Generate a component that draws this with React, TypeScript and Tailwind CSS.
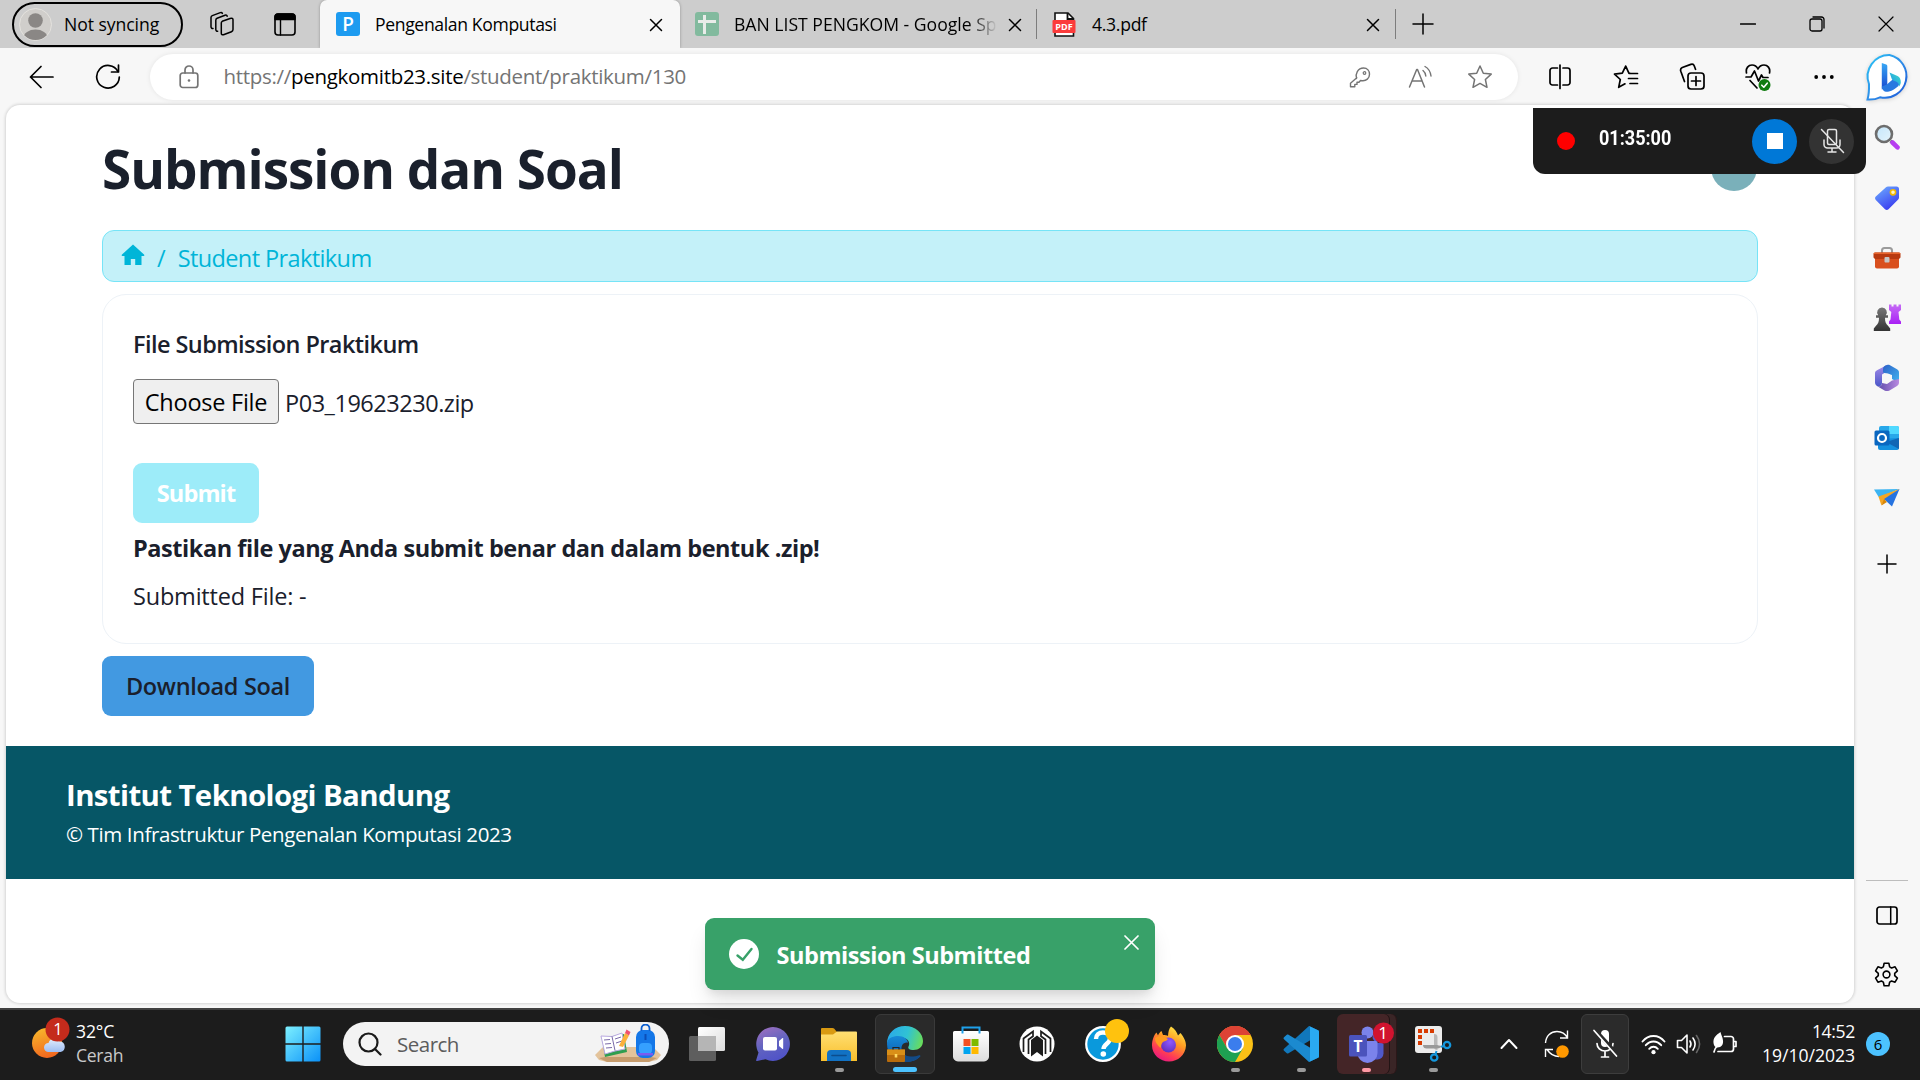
import React from "react";

type P = { children?: React.ReactNode; className?: string };

function Svg({ w, h, children, className = "" }: { w: number; h: number } & P) {
  return (
    <svg
      width={w}
      height={h}
      viewBox={`0 0 ${w} ${h}`}
      fill="none"
      stroke="currentColor"
      strokeWidth={1.5}
      strokeLinecap="round"
      strokeLinejoin="round"
      className={`shrink-0 ${className}`}
    >
      {children}
    </svg>
  );
}

const Cell = ({ children, className = "" }: P) => (
  <div className={`flex shrink-0 items-center justify-center ${className}`}>{children}</div>
);

/* ---------- tab strip ---------- */

const CloseX = ({ className = "" }: P) => (
  <Svg w={14} h={14} className={className}>
    <path d="M1.5 1.5l11 11M12.5 1.5l-11 11" />
  </Svg>
);

function TabStrip() {
  return (
    <div className="flex h-12 shrink-0 items-center bg-[#cdcdcd] text-[17.6px] text-black">
      <div className="ml-3 flex h-[45px] w-[171px] shrink-0 items-center rounded-full border-2 border-black pl-[5px]">
        <svg width="33" height="33" viewBox="0 0 33 33" className="shrink-0">
          <defs>
            <clipPath id="av">
              <circle cx="16.5" cy="16.5" r="15.5" />
            </clipPath>
          </defs>
          <circle cx="16.5" cy="16.5" r="16" fill="#d0cecb" stroke="#e4e2de" strokeWidth="1" />
          <g clipPath="url(#av)" fill="#8a8785">
            <circle cx="16.5" cy="12.5" r="7.3" />
            <ellipse cx="16.5" cy="30" rx="12" ry="8.5" />
          </g>
        </svg>
        <span className="ml-[12px] whitespace-nowrap tracking-[-0.06px]">Not syncing</span>
      </div>
      <Svg w={26} h={26} className="ml-[26px]">
        <path d="M13.2 10.3l8.6-3a1.6 1.6 0 0 1 2.2 1.5v9.8c0 1-.5 1.700-1.500 2.100l-8 3c-1.200.4-2.200-.3-2.200-1.500V12c0-.8.300-1.400.900-1.700z" />
        <path d="M8.700 20.200c-1 .2-1.900-.5-1.900-1.600V9.200c0-1 .4-1.600 1.300-2l7.900-3c1-.4 1.900 0 2.200 1" />
        <path d="M4 17.500c-1.100.1-2-.6-2-1.700V6.600c0-1 .4-1.600 1.300-2l8-3c.9-.3 1.700 0 2.100.800" />
      </Svg>
      <Svg w={22} h={23} className="ml-[39px]">
        <rect x="1" y="1" width="20" height="21" rx="3" strokeWidth="1.6" />
        <path d="M1 6.500V4a3 3 0 0 1 3-3h14a3 3 0 0 1 3 3v2.500z" fill="currentColor" />
        <path d="M6.500 7v15" strokeWidth="1.400" />
      </Svg>

      <div className="ml-6 flex h-12 w-[360px] shrink-0 items-center rounded-t-[7px] bg-[#f7f7f7] pl-4 pr-[17px] shadow-[0_0_3px_rgba(0,0,0,0.3)]">
        <div className="flex size-6 shrink-0 items-center justify-center rounded-[3px] bg-[#1d9bf0] text-[19px] font-semibold leading-none text-white">
          P
        </div>
        <span className="ml-[15px] whitespace-nowrap tracking-[-0.36px]">Pengenalan Komputasi</span>
        <CloseX className="ml-auto mt-0.5" />
      </div>

      <div className="flex h-[30px] w-[357px] shrink-0 items-center border-r-[1.500px] border-[#7d7d7d] pl-[15px] pr-[14px]">
        <svg width="24" height="24" viewBox="0 0 24 24" className="shrink-0">
          <rect width="24" height="24" rx="3" fill="#82ba9e" />
          <path d="M3 9.500h18M9.500 3v19" stroke="#e9ece9" strokeWidth="3" />
        </svg>
        <span className="ml-[15px] w-[262px] shrink-0 overflow-hidden whitespace-nowrap bg-linear-to-r from-black from-88% to-[#c4c4c4] bg-clip-text text-transparent">
          BAN LIST PENGKOM - Google Sp
        </span>
        <CloseX className="ml-auto mt-0.5" />
      </div>

      <div className="flex h-[30px] w-[359px] shrink-0 items-center border-r-[1.500px] border-[#7d7d7d] pl-[15px] pr-[15px]">
        <svg width="24" height="25" viewBox="0 0 24 25" className="shrink-0">
          <path d="M3 1h13l5.500 5.500V24H3z" fill="#fff" stroke="#111" strokeWidth="1.600" />
          <path d="M15.500 1v6H21" fill="none" stroke="#111" strokeWidth="1.800" />
          <rect x="0.500" y="8" width="23" height="13" rx="1" fill="#fb3b3b" />
          <text x="12" y="18" fontSize="9" fontWeight="700" fill="#fff" textAnchor="middle" fontFamily="Open Sans, sans-serif">
            PDF
          </text>
        </svg>
        <span className="ml-[16px] whitespace-nowrap tracking-[-0.3px]">4.3.pdf</span>
        <CloseX className="ml-auto mt-0.5" />
      </div>

      <Svg w={22} h={22} className="ml-4">
        <path d="M11 1v20M1 11h20" />
      </Svg>

      <div className="ml-auto flex">
        <Cell className="w-[69px]">
          <Svg w={16} h={16}>
            <path d="M0.500 8h15" strokeWidth="1.300" />
          </Svg>
        </Cell>
        <Cell className="w-[69px]">
          <Svg w={16} h={16}>
            <rect x="1" y="3" width="12" height="12" rx="2" strokeWidth="1.300" />
            <path d="M4 1h8.500A2.500 2.500 0 0 1 15 3.500V12" strokeWidth="1.300" />
          </Svg>
        </Cell>
        <Cell className="w-[69px]">
          <Svg w={16} h={16}>
            <path d="M1 1l14 14M15 1L1 15" strokeWidth="1.200" />
          </Svg>
        </Cell>
      </div>
    </div>
  );
}

/* ---------- toolbar ---------- */

function BingLogo() {
  return (
    <svg width="46" height="47" viewBox="0 0 46 47" className="mt-px overflow-visible drop-shadow-sm">
      <defs>
        <linearGradient id="bg1" x1="0" y1="0" x2="1" y2="1">
          <stop offset="0" stopColor="#29c5f6" />
          <stop offset="0.500" stopColor="#2f8fe9" />
          <stop offset="1" stopColor="#1a53d6" />
        </linearGradient>
        <linearGradient id="bg2" x1="0" y1="0" x2="0" y2="1">
          <stop offset="0" stopColor="#38a8f5" />
          <stop offset="1" stopColor="#1746cf" />
        </linearGradient>
        <linearGradient id="bg3" x1="1" y1="0" x2="0" y2="1">
          <stop offset="0" stopColor="#3fe0c8" />
          <stop offset="1" stopColor="#1b8ceb" />
        </linearGradient>
      </defs>
      <path d="M23.500 1A21.500 21.500 0 1 1 14 43.300C10.500 45 6 45.800 1.500 45.500C2.800 41 3.200 36.500 3 30A21.500 21.500 0 0 1 23.500 1z" fill="#fff" stroke="url(#bg1)" strokeWidth="2" />
      <path d="M15.800 9l4.400 1.500c.7.300 1.100.8 1.100 1.600v18.400l-5.500 5V9z" fill="url(#bg2)" />
      <path d="M15.800 32.500c0 4 3.200 6 7.200 5 3.500-.9 6.500-2.800 8.800-5 1.500-1.700 2-3 2-5.500l-6.500-2-6.500 5.500z" fill="#2878e0" />
      <path d="M23.500 18.500l8 3.500c2.300 1.200 3.500 3.500 3.300 6.500-.2 1.800-.8 3-2 4.200.5-3-1-4.500-3.500-5.500l-2-.8c-.8-.3-1.300-.8-1.600-1.600z" fill="url(#bg3)" />
    </svg>
  );
}

function Toolbar() {
  return (
    <div className="flex h-[57px] shrink-0 items-center bg-[#f7f7f7] pl-[9px] text-black">
      <Cell className="w-[66px]">
        <Svg w={26} h={24}>
          <path d="M24 12H1.500M12 1.500L1.500 12 12 22.500" strokeWidth="1.700" />
        </Svg>
      </Cell>
      <Cell className="w-[66px]">
        <Svg w={26} h={26}>
          <path d="M23 7.500A11.300 11.300 0 1 0 24.300 13" strokeWidth="1.700" />
          <path d="M23.500 1v7h-7" strokeWidth="1.700" />
        </Svg>
      </Cell>
      <div className="ml-[9px] flex h-[46px] w-[1368px] shrink-0 items-center rounded-full bg-white pl-[29px] pr-2 text-[#747474] shadow-[0_0_5px_rgba(0,0,0,0.08)]">
        <Svg w={20} h={24}>
          <rect x="1.200" y="8" width="17.600" height="14.500" rx="2.500" strokeWidth="1.700" />
          <path d="M6 8V5a4 4 0 0 1 8 0v3" strokeWidth="1.700" />
          <circle cx="10" cy="15.500" r="1.300" fill="currentColor" stroke="none" />
        </Svg>
        <span className="ml-[24.500px] whitespace-nowrap text-[20.5px] tracking-[-0.3px]">
          https://<span className="text-black">pengkomitb23.site</span>/student/praktikum/130
        </span>
        <Cell className="ml-auto w-[60px]">
          <Svg w={22} h={24}>
            <path d="M7.500 13.500c-1.400-4.500 1.200-10.500 7-10.500 4 0 6 3 6 6.200 0 4-3.200 7-7.500 6.500l-1.500-.2-1.500 1.700H8v2.200H5.800v2.300H1.500v-3.500l6.300-5.500" strokeWidth="1.400" />
            <circle cx="15.500" cy="8" r="1.300" strokeWidth="1.200" />
          </Svg>
        </Cell>
        <Cell className="w-[60px]">
          <Svg w={24} h={24}>
            <path d="M1.500 22L8.700 4.500h.8L16.500 22M4 16h10.200" />
            <path d="M15 5.500c1.500 1.200 2.500 3 2.800 5.500M17 1.500c3.500 2 5.500 5.500 6 9.500" strokeWidth="1.400" />
          </Svg>
        </Cell>
        <Cell className="w-[60px]">
          <Svg w={26} h={26}>
            <path d="M13 2l3.300 7.200 7.900.9-5.800 5.400 1.600 7.800L13 19.400l-7 3.900 1.600-7.800-5.800-5.400 7.900-.9z" />
          </Svg>
        </Cell>
      </div>
      <Cell className="ml-[9px] w-[66px]">
        <Svg w={24} h={26}>
          <path d="M9.500 4H4.500A2.500 2.500 0 0 0 2 6.500v12A2.500 2.500 0 0 0 4.500 21h5M12 1v23.500M15 4h4.500A2.500 2.500 0 0 1 22 6.500v12a2.500 2.500 0 0 1-2.500 2.500H15" strokeWidth="1.700" />
        </Svg>
      </Cell>
      <Cell className="w-[66px]">
        <Svg w={26} h={26}>
          <path d="M17 9.300h-1l-3.300-7.200L9.300 9.200l-7.800.9 5.800 5.400-1.600 7.800 6.300-3.500M17 9.500h7.500M15.500 14.500h9M17 19.500h7.500" strokeWidth="1.700" />
        </Svg>
      </Cell>
      <Cell className="w-[66px]">
        <Svg w={26} h={28}>
          <rect x="9" y="10" width="16" height="16" rx="3" strokeWidth="1.700" />
          <path d="M17 13.500v9M12.500 18h9M5.500 18.500L1.800 8.300C1.200 6.500 1.800 5.200 3.300 4.500l8.500-3.100c1.500-.5 3 .2 3.500 1.600l1.200 3.300" strokeWidth="1.700" />
        </Svg>
      </Cell>
      <Cell className="w-[66px]">
        <Svg w={26} h={28}>
          <path d="M1.500 10C.5 5 3.500 2 7 2c2.800 0 4.800 1.500 6 4 1.200-2.500 3.200-4 6-4 3.500 0 6.500 3 5.500 8M5 17.500l7 7.500" strokeWidth="1.700" />
          <path d="M1 14h5l3.500-6 4 10 3-6 1.500 2.500h5" strokeWidth="1.700" />
          <circle cx="19.500" cy="22" r="6" fill="#107c10" stroke="none" />
          <path d="M16.800 22.200l2 2 3.400-4" stroke="#fff" strokeWidth="1.600" />
        </Svg>
      </Cell>
      <Cell className="w-[66px]">
        <Svg w={20} h={6}>
          <g fill="currentColor" stroke="none">
            <circle cx="2.200" cy="3" r="1.900" />
            <circle cx="10" cy="3" r="1.900" />
            <circle cx="17.800" cy="3" r="1.900" />
          </g>
        </Svg>
      </Cell>
      <Cell className="w-[63px]">
        <BingLogo />
      </Cell>
    </div>
  );
}

/* ---------- web page ---------- */

function Page() {
  return (
    <main className="ml-1.5 flex h-[898px] w-[1848px] shrink-0 flex-col overflow-hidden rounded-[14px] bg-white text-[23.5px] leading-9 text-[#1a202c] shadow-[0_0_3px_1px_rgba(0,0,0,0.14)]">
      <div className="flex flex-col px-24">
        <div className="flex h-[125px] items-start justify-between pt-8">
          <h1 className="whitespace-nowrap text-[53px] font-bold leading-[64px] tracking-[-1.03px]">Submission dan Soal</h1>
          <div className="mr-px mt-2 size-[46px] rounded-full bg-[#7ab0ba]" />
        </div>
        <nav className="flex h-[52px] items-center rounded-xl border-[1.500px] border-[#76e4f7] bg-[#c4f1f9] pl-[18px] text-[#00b5d8]">
          <svg width="24" height="22" viewBox="0 0 24 22" className="mb-[3px]" fill="currentColor">
            <path d="M12 0.500L23 10.500c.7.700.4 1.500-.4 1.500H20.500v9h-6.300v-6H9.800v6H3.500v-9H1.400c-.8 0-1.100-.8-.4-1.500z" />
          </svg>
          <span className="ml-3 mt-[3px]">/</span>
          <span className="ml-3 mt-[3px] whitespace-nowrap tracking-[-0.6px]">Student Praktikum</span>
        </nav>

        <section className="mt-3 flex h-[350px] flex-col items-start rounded-3xl border-[1.500px] border-[#edf2f7] pl-[30px] pt-[31px]">
          <label className="whitespace-nowrap font-semibold tracking-[-0.57px]">File Submission Praktikum</label>
          <div className="mt-[17px] flex h-[45px] items-center">
            <button className="flex h-[45px] w-[146px] items-center justify-center whitespace-nowrap rounded-[4px] border-[1.500px] border-[#767676] bg-[#efefef] tracking-[-0.25px] text-black">
              Choose File
            </button>
            <span className="ml-1.5 mt-0.5 whitespace-nowrap tracking-[-0.47px]">P03_19623230.zip</span>
          </div>
          <button className="mt-[39px] flex h-[60px] w-[126px] shrink-0 items-center justify-center rounded-[9px] bg-[#9decf9] font-bold tracking-[-0.85px] text-white">
            Submit
          </button>
          <p className="mt-[7px] whitespace-nowrap font-bold tracking-[-0.44px]">
            Pastikan file yang Anda submit benar dan dalam bentuk .zip!
          </p>
          <p className="mt-3 whitespace-nowrap tracking-[-0.2px]">Submitted File: -</p>
        </section>

        <button className="mt-3 flex h-[60px] w-[212px] items-center justify-center whitespace-nowrap rounded-[9px] bg-[#4299e1] font-semibold tracking-[-0.32px]">
          Download Soal
        </button>
      </div>

      <footer className="mt-[30px] flex h-[133px] flex-col bg-[#065666] pl-[60px] pt-[27px] text-white">
        <h2 className="whitespace-nowrap text-[29.4px] font-bold leading-[45px] tracking-[-0.6px]">Institut Teknologi Bandung</h2>
        <p className="whitespace-nowrap text-[20.5px] leading-8 tracking-[-0.38px]">© Tim Infrastruktur Pengenalan Komputasi 2023</p>
      </footer>
    </main>
  );
}

/* ---------- Edge sidebar ---------- */

function Sidebar() {
  return (
    <aside className="flex h-[903px] w-[66px] shrink-0 flex-col items-center pb-[5px] pr-px pt-0.5 text-black">
      <Cell className="h-[60px] w-full">
        <svg width="26" height="26" viewBox="0 0 26 26">
          <defs>
            <linearGradient id="sg" x1="0" y1="0" x2="1" y2="1">
              <stop offset="0" stopColor="#c4e6fb" />
              <stop offset="1" stopColor="#e6f4fb" />
            </linearGradient>
          </defs>
          <path d="M16.500 17l2.500 2.200" stroke="#666" strokeWidth="3" />
          <path d="M18.500 18.500l5 4.800" stroke="#b63df0" strokeWidth="4.600" strokeLinecap="round" />
          <circle cx="10" cy="10" r="8" fill="url(#sg)" stroke="#6d6d6d" strokeWidth="2.600" />
        </svg>
      </Cell>
      <Cell className="h-[61px] w-full">
        <svg width="26" height="26" viewBox="0 0 26 26">
          <defs>
            <linearGradient id="tg" x1="0" y1="0" x2="0.600" y2="1">
              <stop offset="0" stopColor="#6fb1ff" />
              <stop offset="1" stopColor="#3a3df0" />
            </linearGradient>
          </defs>
          <path d="M14 1.500h8.500a2.500 2.500 0 0 1 2.500 2.500v8.500c0 .8-.2 1.400-.8 2L14.500 24.200c-1 1-2.500 1-3.500 0L1.800 15c-1-1-1-2.400 0-3.400L12 2.300c.5-.5 1.200-.8 2-.8z" fill="url(#tg)" />
          <circle cx="19" cy="7.300" r="2.600" fill="#fff3c4" stroke="#f5b800" strokeWidth="1.600" />
        </svg>
      </Cell>
      <Cell className="h-[60px] w-full">
        <svg width="28" height="24" viewBox="0 0 28 24">
          <path d="M9 7V4.500A2.500 2.500 0 0 1 11.500 2h5A2.500 2.500 0 0 1 19 4.500V7" fill="none" stroke="#9b9b9b" strokeWidth="2" />
          <rect x="2" y="10" width="24" height="12.500" rx="2" fill="#d9501e" />
          <path d="M2 6.500h24a1.500 1.500 0 0 1 1.500 1.500v3.500L26 13H2L.5 11.500V8A1.500 1.500 0 0 1 2 6.500z" fill="#b83a10" />
          <path d="M.5 8A1.500 1.500 0 0 1 2 6.500h24A1.500 1.500 0 0 1 27.500 8z" fill="#e8642c" />
          <rect x="11.500" y="11" width="5" height="5.500" rx="1" fill="#c6c6c6" />
        </svg>
      </Cell>
      <Cell className="h-[59px] w-full">
        <svg width="28" height="29" viewBox="0 0 28 29">
          <defs>
            <linearGradient id="rk" x1="0" y1="0" x2="0" y2="1">
              <stop offset="0" stopColor="#c56bf5" />
              <stop offset="1" stopColor="#a920f5" />
            </linearGradient>
            <linearGradient id="pw" x1="0" y1="0" x2="0" y2="1">
              <stop offset="0" stopColor="#777" />
              <stop offset="1" stopColor="#333" />
            </linearGradient>
          </defs>
          <path d="M16 1.500h2.500v2h2v-2h3v2h2v-2H28V7l-2.500 2 .8 7.500L28 18.500V21H16v-2.500l1.500-2 .8-7.500L16 7z" fill="url(#rk)" />
          <path d="M9 4.500a4.800 4.800 0 0 1 3.800 7.800H15v2.400h-3c0 4 .7 6 3.200 8.300l2 2.500V28H.8v-2.500l2-2.500C5.300 20.700 6 18.700 6 14.700H3v-2.400h2.200A4.800 4.800 0 0 1 9 4.500z" fill="url(#pw)" />
        </svg>
      </Cell>
      <Cell className="h-[61px] w-full">
        <svg width="26" height="28" viewBox="0 0 26 28">
          <defs>
            <linearGradient id="m1" x1="0" y1="0" x2="0" y2="1">
              <stop offset="0" stopColor="#a58ce8" />
              <stop offset="1" stopColor="#4b57c9" />
            </linearGradient>
            <linearGradient id="m2" x1="0" y1="0" x2="1" y2="1">
              <stop offset="0" stopColor="#2c61c8" />
              <stop offset="1" stopColor="#43b6f0" />
            </linearGradient>
            <linearGradient id="m3" x1="0" y1="0" x2="1" y2="0">
              <stop offset="0" stopColor="#5a49a8" />
              <stop offset="1" stopColor="#b98ae0" />
            </linearGradient>
          </defs>
          <path d="M13 1L3 6.300C1.500 7.100 1 8 1 9.500v9c0 1.500.8 2.800 2 3.500 2.500 1.300 5-.3 5-3v-8.500L17 5z" fill="url(#m1)" />
          <path d="M13 1c1-.3 2-.2 3 .3l7 4c1.500.9 2 1.900 2 3.400V19l-7-4v-4L9 8.500V5c0-2 1.500-3.500 4-4z" fill="url(#m2)" />
          <path d="M25 15v3.500c0 1.500-.6 2.600-2 3.400l-7.500 4.500c-1.700.9-3.300.9-5 0L3 22c2.700 1 5 0 5-3l5 1 5-3.500z" fill="url(#m3)" />
          <circle cx="13" cy="14" r="4.600" fill="#f7f7f7" />
        </svg>
      </Cell>
      <Cell className="h-[60px] w-full">
        <svg width="26" height="26" viewBox="0 0 26 26">
          <path d="M7 1h16a2 2 0 0 1 2 2v13H5V3a2 2 0 0 1 2-2z" fill="#28a8ea" />
          <path d="M15 1h8a2 2 0 0 1 2 2v6H15z" fill="#50d9ff" />
          <path d="M5 9h10v8H5z" fill="#0364b8" />
          <path d="M4 14l21-1v10a2 2 0 0 1-2 2H6a2 2 0 0 1-2-2z" fill="#1490df" />
          <path d="M25 13v11L12 17z" fill="#1066b5" />
          <rect x="0.500" y="5.500" width="15" height="15" rx="1.500" fill="#0a67c0" />
          <circle cx="8" cy="13" r="4" fill="none" stroke="#fff" strokeWidth="2.200" />
        </svg>
      </Cell>
      <Cell className="h-[60px] w-full">
        <svg width="28" height="20" viewBox="0 0 28 20">
          <path d="M1 1.500L26.500 1 6 9.500z" fill="#3cb4f2" />
          <path d="M26.500 1L5.500 8.500l2.800 8.800 3-4.300z" fill="#f5a623" />
          <path d="M26.500 1L11 11l8 7.500z" fill="#2673e0" />
          <path d="M11 11l-2.500 6.500L14 14z" fill="#d98708" />
        </svg>
      </Cell>
      <Cell className="mt-1.5 h-[60px] w-full">
        <Svg w={20} h={20}>
          <path d="M10 1v18M1 10h18" />
        </Svg>
      </Cell>
      <div className="mt-auto h-px w-[42px] bg-[#bdbdbd]" />
      <Cell className="mt-1 h-[60px] w-full">
        <Svg w={22} h={19}>
          <rect x="1" y="1" width="20" height="17" rx="2.500" strokeWidth="1.700" />
          <path d="M14.700 1v17" />
        </Svg>
      </Cell>
      <Cell className="h-[58px] w-full">
        <svg width="27" height="27" viewBox="0 0 24 24" fill="none" stroke="currentColor" strokeWidth="1.400" strokeLinejoin="round">
          <path d="M9.900 1.500h4.200l.7 3.200 1.700 1 3.100-1 2.100 3.600-2.400 2.200v2l2.400 2.200-2.100 3.600-3.100-1-1.700 1-.7 3.200H9.900l-.7-3.200-1.700-1-3.100 1-2.100-3.600 2.400-2.200v-2L2.300 8.300l2.100-3.600 3.100 1 1.700-1z" transform="translate(0 .5)" />
          <circle cx="12" cy="12" r="3" />
        </svg>
      </Cell>
    </aside>
  );
}

/* ---------- overlays ---------- */

function Recorder() {
  return (
    <div className="absolute left-[1533px] top-[108px] flex h-[66px] w-[333px] items-center rounded-b-xl bg-[#1c1c1c] pl-6">
      <div className="size-[18px] rounded-full bg-[#ff0000]" />
      <span className="mb-[5px] ml-[24px] origin-left scale-x-[0.860] font-['Roboto'] text-[21px] font-bold leading-none text-white">
        01:35:00
      </span>
      <Cell className="ml-auto size-[45px] rounded-full bg-[#0078d7]">
        <div className="size-4 bg-white" />
      </Cell>
      <Cell className="ml-3 mr-3 size-[45px] rounded-full bg-[#333] text-[#e6e6e6]">
        <Svg w={26} h={26}>
          <rect x="8.500" y="1.500" width="9" height="15" rx="1.500" />
          <path d="M5 12v4.500a3.500 3.500 0 0 0 3.500 3.500h9a3.500 3.500 0 0 0 3.500-3.500V12M13 20v4M9 24h8M2.500 1.500l22 23" />
        </Svg>
      </Cell>
    </div>
  );
}

function Toast() {
  return (
    <div className="absolute left-[705px] top-[918px] flex h-[72px] w-[450px] items-center rounded-[9px] bg-[#38a169] pl-6 text-white shadow-[0_14px_22px_-4px_rgba(0,0,0,0.12),0_6px_9px_-3px_rgba(0,0,0,0.08)]">
      <svg width="30" height="30" viewBox="0 0 30 30" className="shrink-0">
        <circle cx="15" cy="15" r="15" fill="#fff" />
        <path d="M8.500 16.500l5.300 4.300 8.700-10.800" fill="none" stroke="#38a169" strokeWidth="2.400" strokeLinecap="round" />
      </svg>
      <span className="ml-[17.500px] mt-px whitespace-nowrap text-[23.5px] font-bold leading-9 tracking-[-0.45px]">Submission Submitted</span>
      <svg width="15" height="15" viewBox="0 0 15 15" className="mb-6 ml-auto mr-[16px]" stroke="#fff" strokeWidth="1.700" strokeLinecap="round">
        <path d="M1 1l13 13M14 1L1 14" />
      </svg>
    </div>
  );
}

/* ---------- taskbar ---------- */

function TaskApp({ children, className = "", mark = "" }: P & { mark?: string }) {
  return (
    <div className={`relative flex h-[60px] w-[60px] shrink-0 items-center justify-center rounded-md ${className}`}>
      {children}
      {mark && <span className={`absolute bottom-0.5 h-1 rounded-full ${mark}`} />}
    </div>
  );
}

function TaskApps() {
  return (
    <div className="ml-2 flex gap-1.5">
      <TaskApp>
        <svg width="36" height="34" viewBox="0 0 36 34">
          <defs>
            <linearGradient id="tv" x1="0" y1="0" x2="1" y2="1">
              <stop offset="0" stopColor="#fff" />
              <stop offset="1" stopColor="#dcdcdc" />
            </linearGradient>
          </defs>
          <rect x="9" y="0" width="27" height="24" rx="1.500" fill="url(#tv)" />
          <rect x="0" y="9" width="27" height="25" rx="1.500" fill="#5e5e5e" />
          <path d="M9 9h18v15H9z" fill="#b5b5b5" />
        </svg>
      </TaskApp>
      <TaskApp>
        <svg width="34" height="34" viewBox="0 0 34 34">
          <defs>
            <linearGradient id="ch" x1="0.200" y1="0" x2="0.600" y2="1">
              <stop offset="0" stopColor="#9c6fc0" />
              <stop offset="0.500" stopColor="#6264c0" />
              <stop offset="1" stopColor="#4f52c8" />
            </linearGradient>
          </defs>
          <path d="M17 0a17 17 0 1 1-7.500 32.300L1 34c-.8.100-1-.3-.8-1L2.500 25.500A17 17 0 0 1 17 0z" fill="url(#ch)" />
          <rect x="7" y="10" width="14" height="13.500" rx="2" fill="#fff" />
          <path d="M23 14l3.500-3c.4-.2.700 0 .7.400v10.200c0 .4-.3.600-.7.400L23 19z" fill="#fff" />
        </svg>
      </TaskApp>
      <TaskApp mark="w-[9px] bg-[#9a9a9a]">
        <svg width="36" height="33" viewBox="0 0 36 33">
          <defs>
            <linearGradient id="fl" x1="0" y1="0" x2="0" y2="1">
              <stop offset="0" stopColor="#ffdf73" />
              <stop offset="1" stopColor="#f9bf2c" />
            </linearGradient>
          </defs>
          <path d="M1 0h10.500c.8 0 1.200.2 1.800.8L16 4v4H0V1a1 1 0 0 1 1-1z" fill="#d99a12" />
          <path d="M0 6.500h12l4-3h19a1 1 0 0 1 1 1V33H0z" fill="url(#fl)" />
          <path d="M6 33v-7a4 4 0 0 1 4-4h16a4 4 0 0 1 4 4v7z" fill="#1272c4" />
          <path d="M11 27.500h14" stroke="#0c4d8d" strokeWidth="1.600" strokeLinecap="round" />
        </svg>
      </TaskApp>
      <TaskApp className="border border-[#3a3a3a] bg-[#2a2a2a]" mark="w-6 -mb-px h-[5px] bg-[#4cc2ff]">
        <svg width="36" height="36" viewBox="0 0 36 36">
          <defs>
            <linearGradient id="e1" x1="0" y1="0.300" x2="1" y2="0.500">
              <stop offset="0" stopColor="#2aa9e8" />
              <stop offset="0.550" stopColor="#30c2d4" />
              <stop offset="1" stopColor="#68dc5e" />
            </linearGradient>
            <linearGradient id="e2" x1="0" y1="0" x2="0" y2="1">
              <stop offset="0" stopColor="#178bd8" />
              <stop offset="1" stopColor="#0a53a8" />
            </linearGradient>
          </defs>
          <path d="M0 18C0 7 8 0 18 0c11 0 18 7.500 18 15 0 6-4.500 9-9.500 9-4 0-6-1.500-5-3.500 2-3 0-8.500-6.500-9C7.500 11 1 14 0 18z" fill="url(#e1)" />
          <path d="M0 18c0-6 6-8 11-8 6 0 9.500 3 10 7-1-1-4.500-.5-6 2.500-2.500 6 3 13 11 12 4-.5 7-2 7.500-1.500C30 34.500 24 36 18 36 8 36 0 28.500 0 18z" fill="url(#e2)" />
          <path d="M15 19.500c-2.500 6 3 12 11 11 4-.5 7-2 7.500-1.500C30 34.500 24 36 18 36c-5-3-6.500-11-3-16.500z" fill="#134b87" />
          <rect x="0" y="23.500" width="18" height="12.500" rx="1" fill="#b86c0c" />
          <path d="M0 23.500h18v5.500H0z" fill="#d98f18" />
          <path d="M6 23.500v-2h6v2" fill="none" stroke="#222" strokeWidth="1.200" />
          <rect x="7.700" y="28" width="2.600" height="3.500" fill="#ffd75e" />
        </svg>
      </TaskApp>
      <TaskApp>
        <svg width="36" height="36" viewBox="0 0 36 36">
          <defs>
            <linearGradient id="st" x1="0" y1="0" x2="0" y2="1">
              <stop offset="0" stopColor="#fff" />
              <stop offset="1" stopColor="#dcdcdc" />
            </linearGradient>
          </defs>
          <path d="M0 6.500A1.500 1.500 0 0 1 1.500 5h33A1.500 1.500 0 0 1 36 6.500V30a5 5 0 0 1-5 5.500H5A5 5 0 0 1 0 30z" fill="url(#st)" />
          <path d="M9.500 7.500V1.500h17v6" fill="none" stroke="#1ea0ea" strokeWidth="2" />
          <path d="M10.500 13h7v7h-7z" fill="#f25022" />
          <path d="M18.500 13h7v7h-7z" fill="#7fba00" />
          <path d="M10.500 21h7v7h-7z" fill="#00a4ef" />
          <path d="M18.500 21h7v7h-7z" fill="#ffb900" />
        </svg>
      </TaskApp>
      <TaskApp>
        <svg width="36" height="36" viewBox="0 0 36 36">
          <circle cx="18" cy="18" r="17.500" fill="#fff" />
          <path d="M4.500 26V12.500L14 5.500v4.800L9.500 13.500V28M31.500 26V12.500L22 5.500v4.800l4.500 3.200V28" fill="none" stroke="#1c1c1c" strokeWidth="1.700" />
          <path d="M12 30.500V14l6-4.500 6 4.500v16.500l-6-4.500z" fill="#1c1c1c" />
        </svg>
      </TaskApp>
      <TaskApp>
        <svg width="36" height="36" viewBox="0 0 36 36" className="overflow-visible">
          <circle cx="18" cy="18" r="16.800" fill="#0a99dc" stroke="#fff" strokeWidth="2.200" />
          <path d="M11 13c0-4.500 3-6.500 7-6.500s7 2.300 7 6c0 5-6.500 5.500-6.500 10.500" fill="none" stroke="#fff" strokeWidth="4.400" />
          <circle cx="18.300" cy="28" r="2.800" fill="#fff" />
          <circle cx="32" cy="5" r="12" fill="#ffc20e" />
        </svg>
      </TaskApp>
      <TaskApp>
        <svg width="36" height="36" viewBox="0 0 36 36">
          <defs>
            <linearGradient id="ff" x1="0.800" y1="0" x2="0.250" y2="1">
              <stop offset="0" stopColor="#fff04a" />
              <stop offset="0.400" stopColor="#ff9a22" />
              <stop offset="0.750" stopColor="#ff3a56" />
              <stop offset="1" stopColor="#e31587" />
            </linearGradient>
            <radialGradient id="fp" cx="0.600" cy="0.300" r="0.800">
              <stop offset="0" stopColor="#9059ff" />
              <stop offset="1" stopColor="#5b2bb8" />
            </radialGradient>
          </defs>
          <path d="M20 0.500c4 2.500 6 6 7 9l2.500-2.500c4 5 5.500 9 5.500 12.500C34.500 29 27 35.500 18 35.500S1 28.500 1 19.500C1 14 3 9 5.500 6.500L7 9.500c.8-2 2-3.500 3.500-4.500L12 9c2 0 4 .3 5 1 .3-4 .7-7 3-9.500z" fill="url(#ff)" />
          <circle cx="17.500" cy="19" r="7.500" fill="url(#fp)" />
          <path d="M4 12c4-3 9-2 13 1-1 2-4 2-5.500 3.500C10 18 10.500 20 9.500 22 7 19 4 17 4 12z" fill="#ff9a1f" />
        </svg>
      </TaskApp>
      <TaskApp mark="w-[9px] bg-[#9a9a9a]">
        <svg width="36" height="36" viewBox="0 0 36 36">
          <circle cx="18" cy="18" r="18" fill="#fbc116" />
          <path d="M18 18L2.400 9A18 18 0 0 1 33.600 9H18z" fill="#dd4335" />
          <path d="M18 9h15.600A18 18 0 0 0 2.400 9l7.800 13.500z" fill="#dd4335" />
          <path d="M2.400 9A18 18 0 0 0 18 36l7.800-13.500L18 24l-7.800-1.500z" fill="#1ea152" />
          <circle cx="18" cy="18" r="9" fill="#fff" />
          <circle cx="18" cy="18" r="7" fill="#3b7ded" />
        </svg>
      </TaskApp>
      <TaskApp mark="w-[9px] bg-[#9a9a9a]">
        <svg width="36" height="36" viewBox="0 0 36 36">
          <path d="M26 0l9 4.300c.7.300 1 .8 1 1.500V9L5.500 27.300c-.6.400-1.200.4-1.700-.1L1 24.700c-.6-.6-.6-1.400 0-2z" fill="#1177bb" />
          <path d="M26 36l9-4.300c.7-.3 1-.8 1-1.500V27L5.500 8.700c-.6-.4-1.200-.4-1.700.1L1 11.300c-.6.600-.6 1.400 0 2z" fill="#1b8ad0" />
          <path d="M26 0l9 4.300c.7.300 1 .8 1 1.500v24.400c0 .7-.3 1.200-1 1.500L26 36c1-.7 1-1 1-2V2c0-1-.2-1.500-1-2z" fill="#2aa9f2" />
        </svg>
      </TaskApp>
      <TaskApp className="border-r border-[#2a1718] bg-[#442527] shadow-[inset_-6px_0_0_#3a2526,inset_-7px_0_0_#221415]" mark="w-[9px] bg-[#ff99a4]">
        <svg width="44" height="40" viewBox="0 0 44 40" className="overflow-visible">
          <circle cx="32" cy="13" r="4.500" fill="#5059c9" />
          <path d="M27 19h10a1.500 1.500 0 0 1 1.500 1.500v9a6 6 0 0 1-6 6H27z" fill="#5059c9" />
          <circle cx="22.500" cy="8.500" r="6" fill="#7b83eb" />
          <path d="M14 17h17a1.500 1.500 0 0 1 1.500 1.500V29a10 10 0 0 1-20 0V18z" fill="#7b83eb" />
          <rect x="4" y="11" width="18" height="21.500" rx="1.500" fill="#4b53bc" />
          <text x="13" y="27.500" fontSize="15.500" fontWeight="700" fill="#fff" textAnchor="middle" fontFamily="Open Sans, sans-serif">
            T
          </text>
          <circle cx="38.500" cy="9" r="10.500" fill="#d1132f" />
          <text x="38" y="15" fontSize="17" fill="#fff" textAnchor="middle" fontFamily="Open Sans, sans-serif">
            1
          </text>
        </svg>
      </TaskApp>
      <TaskApp mark="w-[9px] bg-[#9a9a9a]">
        <svg width="36" height="36" viewBox="0 0 36 36" className="overflow-visible">
          <rect x="0" y="0" width="27" height="27" rx="3" fill="#ececec" />
          <path d="M3 3h4v4H3zM9 3h4v4H9zM15 3h4v4h-4zM3 9h4v4H3zM3 15h4v4H3z" fill="#d83b01" />
          <path d="M19 8c2.500 0 3.500 1 3.500 3.500V24c-2.500 0-3.500-1-3.500-3.500z" fill="#b9b9b9" />
          <path d="M8 19h12c3 0 5 .5 7 1.500-2 1.800-4 2-7 2h-8.500C9.500 22.500 8 21.500 8 19z" fill="#9a9a9a" />
          <circle cx="32" cy="19" r="3.200" fill="none" stroke="#1497dd" strokeWidth="2.300" />
          <circle cx="19.200" cy="31.500" r="3.200" fill="none" stroke="#1497dd" strokeWidth="2.300" />
          <path d="M29 20l-3 .8M20.500 28.500l1-3.500" stroke="#1497dd" strokeWidth="2" />
        </svg>
      </TaskApp>
    </div>
  );
}

function Taskbar() {
  return (
    <div className="flex h-[72px] shrink-0 items-center bg-[#1c1c1c] text-[17.6px] text-white shadow-[inset_0_2px_0_#404040]">
      <div className="ml-8 flex w-[253px] shrink-0 items-center">
        <svg width="40" height="48" viewBox="0 0 40 48" className="mb-1 shrink-0 overflow-visible">
          <defs>
            <linearGradient id="sun" x1="0.300" y1="0" x2="0.600" y2="1">
              <stop offset="0" stopColor="#f8b62b" />
              <stop offset="1" stopColor="#f0641e" />
            </linearGradient>
            <linearGradient id="cl" x1="0" y1="0" x2="0" y2="1">
              <stop offset="0" stopColor="#e3ecfb" />
              <stop offset="1" stopColor="#9dbdf2" />
            </linearGradient>
          </defs>
          <circle cx="15" cy="25" r="15" fill="url(#sun)" />
          <path d="M16.500 34a4.500 4.500 0 0 1 0-9 6 6 0 0 1 11-1.500A5.300 5.300 0 0 1 28.500 34z" fill="url(#cl)" />
          <circle cx="25.500" cy="11.500" r="12" fill="#c42b1c" />
          <text x="26" y="17" fontSize="16.500" fill="#fff" textAnchor="middle" fontFamily="Open Sans, sans-serif">
            1
          </text>
        </svg>
        <div className="mb-0.5 ml-1 flex flex-col leading-6">
          <span className="tracking-[-0.15px]">32°C</span>
          <span className="tracking-[-0.3px] text-[#c8c8c8]">Cerah</span>
        </div>
      </div>
      <svg width="36" height="36" viewBox="0 0 36 36" className="shrink-0">
        <defs>
          <linearGradient id="win" x1="0" y1="0" x2="1" y2="1">
            <stop offset="0" stopColor="#7df0ff" />
            <stop offset="1" stopColor="#0a91f8" />
          </linearGradient>
        </defs>
        <path d="M2 .5h15.300v16.800H.5V2A1.500 1.500 0 0 1 2 .5zM18.700.5H34A1.500 1.500 0 0 1 35.500 2v15.300H18.700zM.5 18.700h16.800v16.800H2A1.500 1.500 0 0 1 .5 34zM18.700 18.700h16.800V34a1.500 1.500 0 0 1-1.500 1.500H18.700z" fill="url(#win)" />
      </svg>
      <div className="ml-[22px] flex h-[44px] w-[326px] shrink-0 items-center rounded-full bg-[#f3f3f3] pl-[15px] pr-2">
        <svg width="24" height="24" viewBox="0 0 24 24" fill="none" stroke="#1a1a1a" strokeWidth="2.200" strokeLinecap="round">
          <circle cx="10.500" cy="10.500" r="9" />
          <path d="M17 17l5.500 5.500" />
        </svg>
        <span className="ml-[15px] text-[20.5px] leading-none tracking-[-0.5px] text-[#5c5c5c]">Search</span>
        <svg width="66" height="40" viewBox="0 0 66 40" className="ml-auto">
          <path d="M0 31l8-8h50l8 8-4 5-9 2H12l-8-2z" fill="#e3c39b" />
          <path d="M4 34l8 4h42l8-4-6-1H10z" fill="#c69c6d" />
          <path d="M7 14l22-4 3 18-22 5z" fill="#2f9e4f" />
          <path d="M6 12l11 .5L27 9l3 16-10 2-10 3z" fill="#fff" stroke="#b9a9e0" strokeWidth="1" />
          <path d="M17 12.500L20 26.500M9 16l6-.5M10 20l6-.5M11 24l6-.500M20 15l6-2M21 19l6-2" stroke="#7a6aa8" strokeWidth="1" />
          <path d="M24 22L30 9l4 2.500L28 23z" fill="#fbb03b" />
          <path d="M30 9l1.500-3.500 4 2.500L34 11.500z" fill="#f0506e" />
          <rect x="41" y="6" width="19" height="28" rx="7" fill="#1477e8" />
          <path d="M46.500 7V4.500a4 4 0 0 1 8 0V7" fill="none" stroke="#0c5fd0" strokeWidth="1.800" />
          <rect x="44" y="19" width="13" height="11" rx="4" fill="#35a0ff" />
          <path d="M43 29h15v2.500H43z" fill="#7a5cf0" />
          <path d="M50.500 10v6" stroke="#0a4fb8" strokeWidth="2" />
        </svg>
      </div>

      <TaskApps />

      <Cell className="ml-[22px] w-12">
        <Svg w={18} h={12}>
          <path d="M1.500 10L9 2l7.500 8" strokeWidth="2" />
        </Svg>
      </Cell>
      <Cell className="w-12">
        <svg width="26" height="30" viewBox="0 0 26 30" fill="none" stroke="#fff" strokeWidth="1.400">
          <path d="M1.500 14C2 6.500 7 2.500 13 2.500c4.500 0 8.500 2.500 10.500 6.500M23.500 1.500V9H16M15 27.500c-5 0-9-2.500-12-7M1.500 28v-7.500H9" />
          <circle cx="18.500" cy="22.500" r="6.300" fill="#ff9800" stroke="none" />
        </svg>
      </Cell>
      <Cell className="h-[60px] w-12 rounded-md border border-[#3d3d3d] bg-[#2b2b2b]">
        <svg width="26" height="30" viewBox="0 0 26 30" fill="none" stroke="#fff" strokeWidth="1.700" strokeLinecap="round">
          <rect x="9" y="1" width="8" height="17" rx="4" fill="#fff" stroke="none" />
          <path d="M5 14.500a8 7.500 0 0 0 16 0M13 22v5.500M9.500 28h7" />
          <path d="M3.500 1.500l21 23" stroke="#2b2b2b" strokeWidth="4" />
          <path d="M2 1.500l22.500 25.500" />
        </svg>
      </Cell>
      <Cell className="ml-1.5 w-9">
        <svg width="25" height="21" viewBox="0 0 25 21" fill="none" stroke="#fff" strokeWidth="1.900" strokeLinecap="round">
          <path d="M1.500 7.500C7.500 .2 17.500 .2 23.500 7.500M4.800 11.200c4.500-5 10.900-5 15.400 0M8.200 14.800c2.500-2.700 6.100-2.700 8.600 0" />
          <circle cx="12.500" cy="18.200" r="2.100" fill="#fff" stroke="none" />
        </svg>
      </Cell>
      <Cell className="w-9">
        <svg width="26" height="24" viewBox="0 0 26 24" fill="none" stroke="#fff" strokeWidth="1.600" strokeLinecap="round" strokeLinejoin="round">
          <path d="M1.500 8.500h4L11 3v18l-5.500-5.500h-4zM14 9c1.300 2 1.300 4 0 6M17 6c2.800 4 2.800 8 0 12" />
          <path d="M20.500 3.500c4 5.500 4 11.500 0 17" stroke="#666" />
        </svg>
      </Cell>
      <Cell className="w-9">
        <svg width="26" height="26" viewBox="0 0 26 26" fill="none" stroke="#fff" strokeWidth="1.700" strokeLinecap="round" strokeLinejoin="round">
          <path d="M12.500 5.500H19a2.500 2.500 0 0 1 2.500 2.500v10a2.500 2.500 0 0 1-2.500 2.500H6M22 10.500h2v5h-2" />
          <path d="M8.500 1C4 4 1 7 1.500 12c.3 3 2 4.500 4 4.500 4 0 6-3 5.500-7C10.700 6 9 4 8.500 1z" fill="#fff" stroke="none" />
          <path d="M5.500 9v5M2 21c.5-3 2-5 4-7" />
        </svg>
      </Cell>
      <div className="mb-0.5 w-[112px] shrink-0 text-right leading-6">
        <div className="tracking-[-0.35px]">14:52</div>
        <div className="tracking-[-0.04px]">19/10/2023</div>
      </div>
      <Cell className="ml-[11px] size-6 rounded-full bg-[#4cc2ff] text-[15px] leading-none text-black">6</Cell>
    </div>
  );
}

export default function App() {
  return (
    <div className="relative flex h-[1080px] w-[1920px] flex-col overflow-hidden bg-[#f7f7f7] font-['Open_Sans',sans-serif]">
      <TabStrip />
      <Toolbar />
      <div className="flex h-[903px] shrink-0">
        <Page />
        <Sidebar />
      </div>
      <Taskbar />
      <Toast />
      <Recorder />
    </div>
  );
}
